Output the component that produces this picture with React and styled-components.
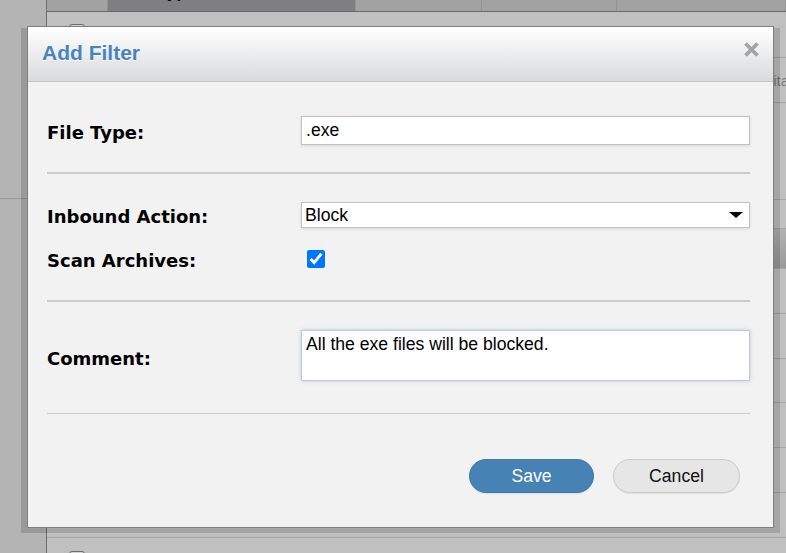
import React from "react";
import styled, { createGlobalStyle } from "styled-components";

const Global = createGlobalStyle`
  html, body { margin: 0; padding: 0; width: 786px; height: 553px; overflow: hidden; background: #c0c0c0; }
  #root { width: 786px; height: 553px; position: relative; }
  * { box-sizing: border-box; }
`;

const Page = styled.div`
  display: flex;
  width: 786px;
  height: 553px;
  overflow: hidden;
  font-family: "Liberation Sans", Arial, sans-serif;
`;

const SideNav = styled.div`
  width: 46px;
  flex: none;
  background: #b4b4b4;
`;

const SideBlock = styled.div`
  height: 199px;
  border-bottom: 1px solid #9a9a9a;
`;

const Main = styled.div`
  flex: 1;
  border-left: 1px solid #6c6c6c;
  background: #c0c0c0;
  display: flex;
  flex-direction: column;
  overflow: hidden;
`;

const HeadRow = styled.div`
  display: flex;
  flex: none;
  height: 12px;
  border-bottom: 1px solid #6a6a6a;
  overflow: hidden;
`;

const HeadCell = styled.div`
  width: ${(p) => (p.$w ? `${p.$w}px` : "auto")};
  flex: ${(p) => (p.$w ? "none" : "1")};
  background: ${(p) => (p.$active ? "#7f7f81" : "#a2a2a2")};
  border-right: 1px solid #939393;
  padding-left: ${(p) => p.$pad || 0}px;
  font-weight: bold;
  font-size: 17px;
  line-height: 14px;
  color: #000;
`;

const HeadText = styled.span`
  display: block;
  margin-top: -14px;
`;

const Row = styled.div`
  height: ${(p) => p.$h}px;
  flex: none;
  border-bottom: 1px solid #a6a6a6;
  background: ${(p) => (p.$head ? "linear-gradient(#b2b2b2, #999999)" : "transparent")};
  display: flex;
  align-items: flex-start;
  padding-top: ${(p) => p.$pt || 0}px;
`;

const RowCheck = styled.span`
  width: 16px;
  height: 16px;
  margin-left: 22px;
  border: 1px solid #6a6a6a;
  border-radius: 3px;
  background: #d4d4d4;
`;

const RowText = styled.span`
  margin-left: ${(p) => p.$ml}px;
  margin-top: 14px;
  font-size: 15px;
  color: #7c7c7c;
  white-space: nowrap;
`;

const Shadow = styled.div`
  position: absolute;
  left: 21px;
  top: 28px;
  width: 759px;
  height: 505px;
  background: rgba(0, 0, 0, 0.14);
`;

const Dialog = styled.div`
  position: absolute;
  left: 27px;
  top: 26px;
  width: 747px;
  height: 502px;
  border: 1px solid #7f7f7f;
  background: #f2f2f2;
  display: flex;
  flex-direction: column;
  font-family: "Liberation Sans", Arial, sans-serif;
`;

const DialogHeader = styled.div`
  height: 55px;
  flex: none;
  border-bottom: 1px solid #c6c6c6;
  background: linear-gradient(#ffffff, #d9dadc);
  display: flex;
  align-items: center;
  justify-content: space-between;
  padding: 0 13px 4px 14px;
`;

const Title = styled.h1`
  margin: 0;
  font-size: 21px;
  line-height: 1;
  font-weight: bold;
  color: #4884bb;
  text-shadow: 0 1px 0 #ffffff;
`;

const Close = styled.svg`
  width: 17px;
  height: 17px;
  margin-bottom: 6px;
`;

const Body = styled.div`
  padding: 34px 23px 0 19px;
  display: flex;
  flex-direction: column;
`;

const Group = styled.div`
  display: flex;
  flex-direction: column;
  gap: 22px;
`;

const FieldRow = styled.div`
  display: grid;
  grid-template-columns: 254px 1fr;
  align-items: center;
`;

const Label = styled.label`
  font-family: "DejaVu Sans", Verdana, sans-serif;
  font-weight: bold;
  font-size: 18px;
  line-height: 18px;
  padding-top: ${(p) => p.$drop || 2}px;
  margin-bottom: -${(p) => p.$drop || 2}px;
  color: #000;
`;

const TextInput = styled.input`
  width: 100%;
  height: 29px;
  border: 1px solid #c2c2c2;
  background: #fff;
  padding: 0 4px;
  font-family: "Liberation Sans", Arial, sans-serif;
  font-size: 17.6px;
  color: #000;
  box-shadow: 0 1px 3px rgba(0, 0, 0, 0.12);
  outline: none;
`;

const SelectBox = styled.div`
  height: 26px;
  border: 1px solid #c2c2c2;
  background: #fff;
  padding: 0 6px 0 3px;
  display: flex;
  align-items: center;
  justify-content: space-between;
  font-size: 17.6px;
  color: #000;
  box-shadow: 0 1px 3px rgba(0, 0, 0, 0.1);
`;

const Caret = styled.svg`
  width: 14px;
  height: 6px;
`;

const CheckCell = styled.div`
  display: flex;
  align-items: center;
  height: 18px;
`;

const Check = styled.input`
  width: 18px;
  height: 18px;
  margin: 0 0 0 6px;
  accent-color: #0075ff;
`;

const TextArea = styled.textarea`
  width: 100%;
  height: 51px;
  border: 1px solid #b8c9e1;
  background: #fff;
  padding: 3px 4px;
  resize: none;
  font-family: "Liberation Sans", Arial, sans-serif;
  font-size: 17.6px;
  line-height: 20px;
  color: #000;
  box-shadow: 0 0 4px rgba(80, 130, 200, 0.35);
  outline: none;
  display: block;
`;

const Divider = styled.hr`
  margin: ${(p) => p.$m};
  border: none;
  height: ${(p) => (p.$thin ? 1 : 2)}px;
  background: #cbcbcb;
`;

const Footer = styled.div`
  display: flex;
  justify-content: flex-end;
  gap: 19px;
  padding-right: 10px;
`;

const Button = styled.button`
  width: ${(p) => p.$w}px;
  height: 34px;
  border-radius: 17px;
  font-family: "Liberation Sans", Arial, sans-serif;
  font-size: 17.6px;
  cursor: pointer;
  border: 1px solid ${(p) => (p.$primary ? "#437ba9" : "#cbcbcb")};
  background: ${(p) => (p.$primary ? "#4682b4" : "#e6e6e6")};
  color: ${(p) => (p.$primary ? "#ffffff" : "#111111")};
  box-shadow: 0 1px 1px rgba(0, 0, 0, 0.08);
`;

const rows = [
  { h: 46, pt: 12, check: true },
  { h: 45, text: "Limitations" },
  { h: 97 },
  { h: 29 },
  { h: 40, head: true },
  { h: 45, pt: 13, check: true },
  { h: 45, pt: 13, check: true },
  { h: 44, pt: 13, check: true },
  { h: 45, pt: 13, check: true },
  { h: 45, pt: 13, check: true },
  { h: 45, pt: 13, check: true },
  { h: 45, pt: 13, check: true },
];

export default function App() {
  return (
    <>
      <Global />
      <Page>
        <SideNav>
          <SideBlock />
        </SideNav>
        <Main>
          <HeadRow>
            <HeadCell $w={61} />
            <HeadCell $w={248} $active $pad={50}>
              <HeadText>Type</HeadText>
            </HeadCell>
            <HeadCell $w={126} />
            <HeadCell $w={135} />
            <HeadCell />
          </HeadRow>
          {rows.map((r, i) => (
            <Row key={i} $h={r.h} $pt={r.pt} $head={r.head}>
              {r.check && <RowCheck />}
              {r.text && <RowText $ml={702}>{r.text}</RowText>}
            </Row>
          ))}
        </Main>
      </Page>

      <Shadow />
      <Dialog role="dialog" aria-label="Add Filter">
        <DialogHeader>
          <Title>Add Filter</Title>
          <Close viewBox="0 0 17 17" aria-label="Close">
            <path d="M2.5 2.5 L14.5 14.5 M14.5 2.5 L2.5 14.5" stroke="#a4a4a4" strokeWidth="3.8" fill="none" />
          </Close>
        </DialogHeader>
        <Body>
          <FieldRow>
            <Label>File Type:</Label>
            <TextInput defaultValue=".exe" readOnly />
          </FieldRow>
          <Divider $m="27px 0 28px" />
          <Group>
            <FieldRow>
              <Label>Inbound Action:</Label>
              <SelectBox>
                <span>Block</span>
                <Caret viewBox="0 0 14 6">
                  <path d="M0 0 H14 L7 6 Z" fill="#000" />
                </Caret>
              </SelectBox>
            </FieldRow>
            <FieldRow>
              <Label>Scan Archives:</Label>
              <CheckCell>
                <Check type="checkbox" defaultChecked />
              </CheckCell>
            </FieldRow>
          </Group>
          <Divider $m="32px 0 28px" />
          <FieldRow>
            <Label $drop={3}>Comment:</Label>
            <TextArea defaultValue="All the exe files will be blocked." readOnly />
          </FieldRow>
          <Divider $thin $m="32px 0 45px" />
          <Footer>
            <Button $primary $w={125}>Save</Button>
            <Button $w={127}>Cancel</Button>
          </Footer>
        </Body>
      </Dialog>
    </>
  );
}
